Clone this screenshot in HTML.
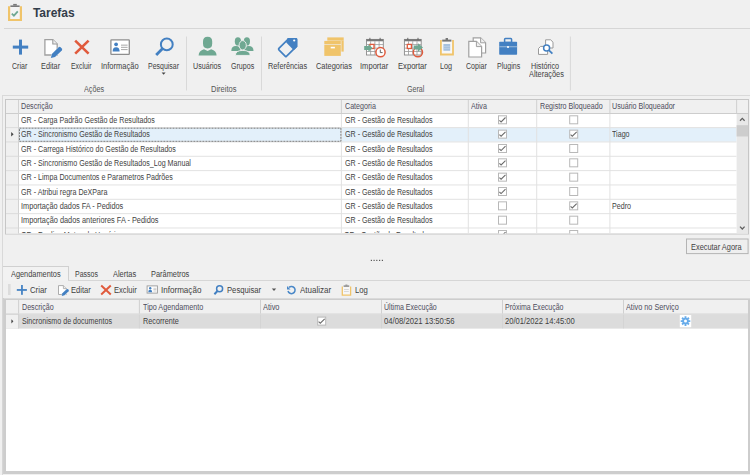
<!DOCTYPE html>
<html><head><meta charset="utf-8"><style>
html,body{margin:0;padding:0;width:750px;height:475px;overflow:hidden;background:#f0f0f0;}
.t{position:absolute;white-space:nowrap;font-family:"Liberation Sans",sans-serif;transform-origin:0 0;}
svg{position:absolute;left:0;top:0}
</style></head><body>
<svg width="750" height="475" viewBox="0 0 750 475">
<path d="M9 7 H21 V20 H9 Z" fill="#f4f4f4"/>
<path d="M9.1 6.2 V20 H20.9 V6.2" fill="none" stroke="#f0c46a" stroke-width="2.2"/>
<path d="M10.4 5.4 H19.6 V7 H10.4 Z" fill="#7a7a7a"/><path d="M13.2 3.9 H16.8 V5.6 H13.2 Z" fill="#7a7a7a"/>
<path d="M11.8 13.6 L13.9 15.6 L17.8 11.3" fill="none" stroke="#6fa892" stroke-width="1.8"/>
<rect x="4" y="28" width="746" height="1" fill="#d6d6d6" />
<rect x="19" y="39.6" width="3" height="15" fill="#4380c2" />
<rect x="12.8" y="45.6" width="15.4" height="3" fill="#4380c2" />
<path d="M44.9 39.6 H52.8 L57.2 44 V55 H44.9 Z" fill="#fff" stroke="#a0a0a0" stroke-width="1.3"/>
<path d="M52.8 39.6 V44 H57.2" fill="#eee" stroke="#9a9a9a" stroke-width="1.1"/>
<path d="M53.6 55.6 L59.6 49.6" stroke="#f0f0f0" stroke-width="5" stroke-linecap="round"/>
<path d="M50.9 58 L51.9 53.9 L58.6 47.2 Q59.6 46.4 60.6 47.2 L61.8 48.4 Q62.6 49.4 61.8 50.4 L55 57.1 Z" fill="#4380c2"/>
<path d="M75.2 40.6 L88.6 53.6 M88.6 40.6 L75.2 53.6" stroke="#e05a3c" stroke-width="2.6" fill="none"/>
<rect x="110.9" y="39.9" width="18.4" height="14.4" fill="#fff" stroke="#8e8e8e" stroke-width="1.3" rx="0.6"/>
<circle cx="116.1" cy="44.3" r="1.9" fill="#4380c2"/>
<path d="M112.6 51.6 Q112.6 47.2 116.1 47.2 Q119.6 47.2 119.6 51.6 Z" fill="#4380c2"/>
<rect x="121" y="44.6" width="6.6" height="1.1" fill="#b0b0b0" />
<rect x="121" y="46.8" width="6.6" height="1.1" fill="#b0b0b0" />
<rect x="121" y="49.0" width="6.6" height="1.1" fill="#b0b0b0" />
<circle cx="166.8" cy="44.4" r="5.9" fill="none" stroke="#4380c2" stroke-width="2"/>
<path d="M162.6 48.6 L156.2 55" stroke="#4380c2" stroke-width="2.8" stroke-linecap="butt"/>
<path d="M161.6 72.6 H165.6 L163.6 74.8 Z" fill="#444"/>
<rect x="186.0" y="36.5" width="1" height="54" fill="#d9d9d9" />
<rect x="261.0" y="36.5" width="1" height="54" fill="#d9d9d9" />
<rect x="569.9" y="36.5" width="1" height="54" fill="#d9d9d9" />
<path d="M203 41.5 Q203 36.8 207.6 36.8 Q212.2 36.8 212.2 41.5 V43.5 Q212.2 48.4 207.6 48.4 Q203 48.4 203 43.5 Z" fill="#6fa892"/>
<path d="M198.6 55.4 Q198.8 50.6 204 49.2 L207.6 51 L211.2 49.2 Q216.4 50.6 216.6 55.4 Z" fill="#6fa892"/>
<path d="M231.3 50.9 Q231.3 45.9 235.95 45.9 Q240.6 45.9 240.6 50.9 Z" fill="#6fa892"/>
<path d="M243.8 50.9 Q243.8 45.9 248.65 45.9 Q253.5 45.9 253.5 50.9 Z" fill="#6fa892"/>
<ellipse cx="237.9" cy="41.45" rx="3.1" ry="4.150000000000002" fill="#6fa892"/>
<ellipse cx="246.9" cy="41.45" rx="3.1" ry="4.150000000000002" fill="#6fa892"/>
<ellipse cx="242.7" cy="45.3" rx="3.6" ry="4.699999999999999" fill="#6fa892" stroke="#f0f0f0" stroke-width="0.9"/>
<path d="M235.4 55.4 Q235.4 50.4 242.8 50.4 Q250.2 50.4 250.2 55.4 Z" fill="#6fa892" stroke="#f0f0f0" stroke-width="0.9"/>
<path d="M278.9 48.4 L288.5 38.8 H295.8 Q296.5 38.8 296.5 39.5 V46.4 L286.4 56.4 Q285.9 56.9 285.4 56.4 L278.9 49.9 Q278.2 49.2 278.9 48.4 Z" fill="none" stroke="#4380c2" stroke-width="1.7" stroke-linejoin="round"/>
<path d="M287.6 38 H296.2 Q297.3 38 297.3 39.1 V46.8 L293.8 50.2 L286.2 42.6 Z" fill="#4380c2"/>
<circle cx="294.2" cy="40.5" r="1.1" fill="#fff"/>
<rect x="327.3" y="37.4" width="16.4" height="3.2" fill="#f0c46a" />
<rect x="341.4" y="40.6" width="2.3" height="11" fill="#f0c46a" />
<rect x="324.3" y="40.9" width="16.5" height="3.2" fill="#f0c46a" />
<rect x="324.3" y="44.7" width="16.5" height="11.2" fill="#f0c46a" />
<rect x="330.7" y="46.8" width="4.2" height="1.6" fill="#fff" />
<rect x="366.5" y="39.400000000000006" width="16.8" height="15.6" fill="#fff" stroke="#8a8a8a" stroke-width="0.9"/>
<rect x="366.5" y="39.1" width="16.8" height="2.2" fill="#7a7a7a" />
<rect x="370.3" y="41.2" width="0.8" height="13.8" fill="#9a9a9a" />
<rect x="366.5" y="44.25000000000001" width="16.8" height="0.8" fill="#9a9a9a" />
<rect x="374.5" y="41.2" width="0.8" height="13.8" fill="#9a9a9a" />
<rect x="366.5" y="47.7" width="16.8" height="0.8" fill="#9a9a9a" />
<rect x="378.70000000000005" y="41.2" width="0.8" height="13.8" fill="#9a9a9a" />
<rect x="366.5" y="51.150000000000006" width="16.8" height="0.8" fill="#9a9a9a" />
<rect x="369.4" y="37.800000000000004" width="1" height="2.4" fill="#666" />
<rect x="379.6" y="37.800000000000004" width="1" height="2.4" fill="#666" />
<rect x="369.9" y="44.4" width="4.1" height="4.1" fill="#fff" stroke="#e05a3c" stroke-width="1.3"/>
<path d="M364.2 45.9 H368.4 V44.2 L372.6 48 L368.4 51.8 V50.1 H364.2 Z" fill="#6fa892"/>
<circle cx="380.5" cy="52.2" r="4.6" fill="#fff" stroke="#e05a3c" stroke-width="1.5"/>
<path d="M380.3 49.6 V52.6 H382.6" fill="none" stroke="#555" stroke-width="0.9"/>
<rect x="404.4" y="39.400000000000006" width="16.8" height="15.6" fill="#fff" stroke="#8a8a8a" stroke-width="0.9"/>
<rect x="404.4" y="39.1" width="16.8" height="2.2" fill="#7a7a7a" />
<rect x="408.2" y="41.2" width="0.8" height="13.8" fill="#9a9a9a" />
<rect x="404.4" y="44.25000000000001" width="16.8" height="0.8" fill="#9a9a9a" />
<rect x="412.4" y="41.2" width="0.8" height="13.8" fill="#9a9a9a" />
<rect x="404.4" y="47.7" width="16.8" height="0.8" fill="#9a9a9a" />
<rect x="416.6" y="41.2" width="0.8" height="13.8" fill="#9a9a9a" />
<rect x="404.4" y="51.150000000000006" width="16.8" height="0.8" fill="#9a9a9a" />
<rect x="407.29999999999995" y="37.800000000000004" width="1" height="2.4" fill="#666" />
<rect x="417.5" y="37.800000000000004" width="1" height="2.4" fill="#666" />
<rect x="407.3" y="44.4" width="4.1" height="4.1" fill="#fff" stroke="#e05a3c" stroke-width="1.3"/>
<circle cx="417.9" cy="52.2" r="4.6" fill="none" stroke="#e05a3c" stroke-width="1.5"/>
<path d="M413.8 45.4 H418 V43.3 L423 47.5 L418 51.7 V49.6 H413.8 Z" fill="#6fa892"/>
<rect x="441" y="40.8" width="12" height="13.8" fill="#f7f7f7"/>
<path d="M440.9 40 V54.5 H453 V40" fill="none" stroke="#f0c46a" stroke-width="1.8"/>
<rect x="442.2" y="39.6" width="9.2" height="2" fill="#777" />
<rect x="445.6" y="38" width="2.4" height="2" fill="#777" />
<rect x="443.4" y="44" width="6.8" height="6.8" fill="#a8c2de" />
<rect x="443.8" y="46" width="6" height="0.5" fill="#c9d9ea" />
<rect x="443.8" y="48.2" width="6" height="0.5" fill="#c9d9ea" />
<path d="M473.2 37.8 H480.6 L485.6 42.8 V53 H473.2 Z" fill="#fff" stroke="#a0a0a0" stroke-width="1.2"/>
<path d="M480.6 37.8 V42.8 H485.6" fill="#eee" stroke="#a0a0a0" stroke-width="1"/>
<path d="M468.8 41.4 H476.4 L481.6 46.6 V57 H468.8 Z" fill="#fff" stroke="#a0a0a0" stroke-width="1.2"/>
<path d="M476.4 41.4 V46.6 H481.6" fill="#eee" stroke="#a0a0a0" stroke-width="1"/>
<rect x="504.6" y="38.6" width="7" height="4" fill="none" stroke="#4380c2" stroke-width="1.5" rx="0.8"/>
<rect x="499.2" y="41.8" width="17.9" height="13" fill="#4380c2" rx="0.7"/>
<rect x="499.2" y="46.1" width="17.9" height="1.2" fill="#8fb2d8" />
<circle cx="508" cy="47" r="1.1" fill="#fff"/>
<path d="M545.6 39.8 H550.6 L553 42.2 V48 H545.6 Z" fill="#fff" stroke="#999" stroke-width="1"/>
<path d="M540.6 46.4 H547.6 V54.4 H538.5 V48.5 Z" fill="#fff" stroke="#999" stroke-width="1"/>
<circle cx="546.6" cy="48" r="3" fill="#fff" stroke="#4380c2" stroke-width="1.5"/>
<path d="M548.8 50.2 L552.4 53.6" stroke="#4380c2" stroke-width="1.8"/>
<rect x="2" y="95" width="748" height="1" fill="#d9d9d9" />
<rect x="2" y="95" width="1" height="380" fill="#d9d9d9" />
<rect x="5" y="99" width="744" height="135.5" fill="#c6c6c6" />
<rect x="6" y="100" width="742" height="133.5" fill="#ffffff" />
<rect x="6" y="100" width="742" height="13.3" fill="#f0f0f0" />
<rect x="6" y="100" width="12.5" height="133.5" fill="#f0f0f0" />
<rect x="6" y="113" width="742" height="1" fill="#cdcdcd" />
<rect x="18" y="100" width="1" height="133.5" fill="#d2d2d2" />
<rect x="19" y="127.9" width="717.5" height="13.8" fill="#e3f0fa" />
<rect x="19" y="127.1" width="717.5" height="1" fill="#e2e2e2" />
<rect x="6" y="127.1" width="12.5" height="1" fill="#dcdcdc" />
<rect x="19" y="141.44" width="717.5" height="1" fill="#e2e2e2" />
<rect x="6" y="141.44" width="12.5" height="1" fill="#dcdcdc" />
<rect x="19" y="155.78" width="717.5" height="1" fill="#e2e2e2" />
<rect x="6" y="155.78" width="12.5" height="1" fill="#dcdcdc" />
<rect x="19" y="170.12" width="717.5" height="1" fill="#e2e2e2" />
<rect x="6" y="170.12" width="12.5" height="1" fill="#dcdcdc" />
<rect x="19" y="184.45999999999998" width="717.5" height="1" fill="#e2e2e2" />
<rect x="6" y="184.45999999999998" width="12.5" height="1" fill="#dcdcdc" />
<rect x="19" y="198.8" width="717.5" height="1" fill="#e2e2e2" />
<rect x="6" y="198.8" width="12.5" height="1" fill="#dcdcdc" />
<rect x="19" y="213.14" width="717.5" height="1" fill="#e2e2e2" />
<rect x="6" y="213.14" width="12.5" height="1" fill="#dcdcdc" />
<rect x="19" y="227.48" width="717.5" height="1" fill="#e2e2e2" />
<rect x="6" y="227.48" width="12.5" height="1" fill="#dcdcdc" />
<rect x="340.9" y="100" width="1" height="13.3" fill="#d0d0d0" />
<rect x="340.9" y="114" width="1" height="119" fill="#e2e2e2" />
<rect x="467.8" y="100" width="1" height="13.3" fill="#d0d0d0" />
<rect x="467.8" y="114" width="1" height="119" fill="#e2e2e2" />
<rect x="536.2" y="100" width="1" height="13.3" fill="#d0d0d0" />
<rect x="536.2" y="114" width="1" height="119" fill="#e2e2e2" />
<rect x="609.4" y="100" width="1" height="13.3" fill="#d0d0d0" />
<rect x="609.4" y="114" width="1" height="119" fill="#e2e2e2" />
<rect x="736.1" y="100" width="1" height="13.3" fill="#d0d0d0" />
<rect x="19.5" y="128.2" width="321.4" height="13.1" fill="none" stroke="#7c7c7c" stroke-width="1" stroke-dasharray="2 1"/>
<path d="M11.2 132 L13.6 134.3 L11.2 136.6 Z" fill="#444"/>
<clipPath id="gclip"><rect x="19" y="114" width="717.5" height="119.5"/></clipPath><g clip-path="url(#gclip)">
<rect x="498.5" y="115.8" width="8" height="8" fill="#fff" stroke="#b8b8b8" stroke-width="1"/>
<path d="M499.4 120.3 L501.1 121.89999999999999 L505.5 117.5" fill="none" stroke="#6c6c6c" stroke-width="1.1"/>
<rect x="569.7" y="115.8" width="8" height="8" fill="#fff" stroke="#b8b8b8" stroke-width="1"/>
<rect x="498.5" y="130.14" width="8" height="8" fill="#fff" stroke="#b8b8b8" stroke-width="1"/>
<path d="M499.4 134.64 L501.1 136.23999999999998 L505.5 131.83999999999997" fill="none" stroke="#6c6c6c" stroke-width="1.1"/>
<rect x="569.7" y="130.14" width="8" height="8" fill="#fff" stroke="#b8b8b8" stroke-width="1"/>
<path d="M570.6 134.64 L572.3000000000001 136.23999999999998 L576.7 131.83999999999997" fill="none" stroke="#6c6c6c" stroke-width="1.1"/>
<rect x="498.5" y="144.48" width="8" height="8" fill="#fff" stroke="#b8b8b8" stroke-width="1"/>
<path d="M499.4 148.98 L501.1 150.57999999999998 L505.5 146.17999999999998" fill="none" stroke="#6c6c6c" stroke-width="1.1"/>
<rect x="569.7" y="144.48" width="8" height="8" fill="#fff" stroke="#b8b8b8" stroke-width="1"/>
<rect x="498.5" y="158.82" width="8" height="8" fill="#fff" stroke="#b8b8b8" stroke-width="1"/>
<path d="M499.4 163.32 L501.1 164.92 L505.5 160.51999999999998" fill="none" stroke="#6c6c6c" stroke-width="1.1"/>
<rect x="569.7" y="158.82" width="8" height="8" fill="#fff" stroke="#b8b8b8" stroke-width="1"/>
<rect x="498.5" y="173.16" width="8" height="8" fill="#fff" stroke="#b8b8b8" stroke-width="1"/>
<path d="M499.4 177.66 L501.1 179.26 L505.5 174.85999999999999" fill="none" stroke="#6c6c6c" stroke-width="1.1"/>
<rect x="569.7" y="173.16" width="8" height="8" fill="#fff" stroke="#b8b8b8" stroke-width="1"/>
<rect x="498.5" y="187.5" width="8" height="8" fill="#fff" stroke="#b8b8b8" stroke-width="1"/>
<path d="M499.4 192.0 L501.1 193.6 L505.5 189.2" fill="none" stroke="#6c6c6c" stroke-width="1.1"/>
<rect x="569.7" y="187.5" width="8" height="8" fill="#fff" stroke="#b8b8b8" stroke-width="1"/>
<rect x="498.5" y="201.83999999999997" width="8" height="8" fill="#fff" stroke="#b8b8b8" stroke-width="1"/>
<rect x="569.7" y="201.83999999999997" width="8" height="8" fill="#fff" stroke="#b8b8b8" stroke-width="1"/>
<path d="M570.6 206.33999999999997 L572.3000000000001 207.93999999999997 L576.7 203.53999999999996" fill="none" stroke="#6c6c6c" stroke-width="1.1"/>
<rect x="498.5" y="216.18" width="8" height="8" fill="#fff" stroke="#b8b8b8" stroke-width="1"/>
<rect x="569.7" y="216.18" width="8" height="8" fill="#fff" stroke="#b8b8b8" stroke-width="1"/>
<rect x="498.5" y="230.51999999999998" width="8" height="8" fill="#fff" stroke="#b8b8b8" stroke-width="1"/>
<path d="M499.4 235.01999999999998 L501.1 236.61999999999998 L505.5 232.21999999999997" fill="none" stroke="#6c6c6c" stroke-width="1.1"/>
<rect x="569.7" y="230.51999999999998" width="8" height="8" fill="#fff" stroke="#b8b8b8" stroke-width="1"/>
</g>
<rect x="736.6" y="114" width="11.4" height="119.5" fill="#e8e8e8" />
<rect x="736.6" y="125.2" width="11.4" height="11.3" fill="#cdcdcd" />
<path d="M740 120.7 L742.3 118.4 L744.6 120.7" fill="none" stroke="#606060" stroke-width="1.3"/>
<path d="M740 226.6 L742.3 229 L744.6 226.6" fill="none" stroke="#606060" stroke-width="1.3"/>
<rect x="686.5" y="239" width="61.6" height="14.6" fill="#efefef" stroke="#b4b4b4" stroke-width="1"/>
<rect x="370.79999999999995" y="259.8" width="1.2" height="1.2" fill="#5a5a5a" />
<rect x="373.5" y="259.8" width="1.2" height="1.2" fill="#5a5a5a" />
<rect x="376.2" y="259.8" width="1.2" height="1.2" fill="#5a5a5a" />
<rect x="379.0" y="259.8" width="1.2" height="1.2" fill="#5a5a5a" />
<rect x="381.79999999999995" y="259.8" width="1.2" height="1.2" fill="#5a5a5a" />
<rect x="3" y="266" width="65.5" height="14.5" fill="#f2f2f2" />
<rect x="3" y="266" width="66" height="1" fill="#d0d0d0" />
<rect x="68" y="266" width="1" height="14.5" fill="#d0d0d0" />
<rect x="68" y="280" width="682" height="1" fill="#d6d6d6" />
<rect x="8" y="284" width="2.6" height="11" fill="#dcdcdc" />
<rect x="21.05" y="285" width="1.8" height="9.8" fill="#4683c4" />
<rect x="16.8" y="289.05" width="10.1" height="1.8" fill="#4683c4" />
<path d="M58.5 285.6 H63.4 L66.4 288.6 V294.5 H58.5 Z" fill="#fff" stroke="#a4a4a4" stroke-width="0.9"/>
<path d="M63.4 285.6 V288.6 H66.4" fill="#eee" stroke="#a4a4a4" stroke-width="0.8"/>
<path d="M63.6 294.2 L67.4 290.6" stroke="#f0f0f0" stroke-width="3.6" stroke-linecap="round"/>
<path d="M61.8 296 L62.4 293.2 L66.6 289.2 Q67.3 288.6 68 289.2 L68.6 289.8 Q69.2 290.5 68.6 291.2 L64.5 295.2 Z" fill="#4380c2"/>
<path d="M101.2 285.6 L110.8 294.6 M110.8 285.6 L101.2 294.6" stroke="#e05a3c" stroke-width="2" fill="none"/>
<rect x="147.1" y="285.9" width="10.3" height="7.2" fill="#fff" stroke="#999" stroke-width="0.9"/>
<circle cx="150.2" cy="288.2" r="1.2" fill="#4380c2"/><path d="M148.2 292.2 Q148.2 289.8 150.2 289.8 Q152.2 289.8 152.2 292.2 Z" fill="#4380c2"/>
<rect x="153.4" y="287.84999999999997" width="3" height="0.7" fill="#bbb" />
<rect x="153.4" y="289.25" width="3" height="0.7" fill="#bbb" />
<rect x="153.4" y="290.65" width="3" height="0.7" fill="#bbb" />
<circle cx="219.6" cy="288.8" r="3" fill="none" stroke="#4380c2" stroke-width="1.5"/>
<path d="M217.4 291 L214.4 294.2" stroke="#4380c2" stroke-width="2"/>
<path d="M271.8 288.6 H276.2 L274 291 Z" fill="#555"/>
<path d="M289.0 287.4 A3.6 3.6 0 1 1 288.0 291.0" fill="none" stroke="#4a88c8" stroke-width="1.5"/>
<path d="M287 285.9 V289.4 H290.5 Z" fill="#4a88c8"/>
<rect x="342.6" y="287" width="7.8" height="8.6" fill="#f7f7f7"/>
<path d="M342.3 286.4 V295.2 H350.6 V286.4" fill="none" stroke="#f0c46a" stroke-width="1.3"/>
<rect x="343.6" y="285.4" width="5.6" height="1.4" fill="#888" />
<rect x="345.4" y="284.6" width="2" height="1" fill="#888" />
<rect x="344" y="289" width="4.8" height="0.8" fill="#d0d0d0" />
<rect x="344" y="291" width="4.8" height="0.8" fill="#d0d0d0" />
<rect x="2" y="298" width="748" height="176" fill="#cdcdcd" />
<rect x="2" y="298" width="1.2" height="176" fill="#d6d6d6" />
<rect x="4" y="298" width="746" height="1" fill="#dadada" />
<rect x="6" y="300" width="742" height="171" fill="#ffffff" />
<rect x="6" y="300" width="742" height="13.6" fill="#f0f0f0" />
<rect x="6" y="300" width="12.6" height="28.6" fill="#f0f0f0" />
<rect x="6" y="313.6" width="742" height="1" fill="#c9c9c9" />
<rect x="19" y="314.6" width="729" height="13.8" fill="#dcdcdc" />
<rect x="6" y="328.2" width="742" height="0.6" fill="#e4e4e4" />
<rect x="18.1" y="300" width="1" height="13.6" fill="#d0d0d0" />
<rect x="138.9" y="300" width="1" height="13.6" fill="#d0d0d0" />
<rect x="138.9" y="314.6" width="1" height="13.8" fill="#d4d4d4" />
<rect x="260.0" y="300" width="1" height="13.6" fill="#d0d0d0" />
<rect x="260.0" y="314.6" width="1" height="13.8" fill="#d4d4d4" />
<rect x="381.0" y="300" width="1" height="13.6" fill="#d0d0d0" />
<rect x="381.0" y="314.6" width="1" height="13.8" fill="#d4d4d4" />
<rect x="502.0" y="300" width="1" height="13.6" fill="#d0d0d0" />
<rect x="502.0" y="314.6" width="1" height="13.8" fill="#d4d4d4" />
<rect x="623.0" y="300" width="1" height="13.6" fill="#d0d0d0" />
<rect x="623.0" y="314.6" width="1" height="13.8" fill="#d4d4d4" />
<rect x="18.1" y="314" width="1" height="14.6" fill="#d0d0d0" />
<path d="M11.4 319.2 L13.4 321.3 L11.4 323.4 Z" fill="#444"/>
<rect x="317.7" y="317.1" width="8" height="8" fill="#fff" stroke="#b8b8b8" stroke-width="1"/>
<path d="M318.59999999999997 321.6 L320.3 323.20000000000005 L324.7 318.8" fill="none" stroke="#6c6c6c" stroke-width="1.1"/>
<rect x="679.8" y="315" width="11.4" height="12.2" fill="#fff"/>
<path d="M688.77 320.16 L690.30 320.13 L690.30 322.07 L688.77 322.04 L688.47 322.75 L689.58 323.81 L688.21 325.18 L687.15 324.07 L686.44 324.37 L686.47 325.90 L684.53 325.90 L684.56 324.37 L683.85 324.07 L682.79 325.18 L681.42 323.81 L682.53 322.75 L682.23 322.04 L680.70 322.07 L680.70 320.13 L682.23 320.16 L682.53 319.45 L681.42 318.39 L682.79 317.02 L683.85 318.13 L684.56 317.83 L684.53 316.30 L686.47 316.30 L686.44 317.83 L687.15 318.13 L688.21 317.02 L689.58 318.39 L688.47 319.45 Z" fill="#66abea"/><circle cx="685.5" cy="321.1" r="1.5" fill="#fff"/>
</svg>
<div style="position:absolute;left:19px;top:227px;width:717px;height:6px;overflow:hidden"><div class="t" style="left:2.10px;top:3.72px;font-size:8.4px;line-height:8.4px;color:#3f3f3f;transform:scaleX(0.851)">GR - Realiza Metas de Usuários</div><div class="t" style="left:325.40px;top:3.72px;font-size:8.4px;line-height:8.4px;color:#3f3f3f;transform:scaleX(0.851)">GR - Gestão de Resultados</div></div>
<div class="t" style="left:32.90px;top:6.90px;font-size:12px;line-height:12px;color:#333d4a;font-weight:bold;transform:scaleX(1.0000)">Tarefas</div>
<div class="t" style="left:11.50px;top:61.80px;font-size:8.4px;line-height:8.4px;color:#3f3f3f;font-weight:normal;transform:scaleX(0.8390)">Criar</div>
<div class="t" style="left:40.60px;top:61.80px;font-size:8.4px;line-height:8.4px;color:#3f3f3f;font-weight:normal;transform:scaleX(0.8737)">Editar</div>
<div class="t" style="left:70.50px;top:61.80px;font-size:8.4px;line-height:8.4px;color:#3f3f3f;font-weight:normal;transform:scaleX(0.8208)">Excluir</div>
<div class="t" style="left:101.30px;top:61.80px;font-size:8.4px;line-height:8.4px;color:#3f3f3f;font-weight:normal;transform:scaleX(0.8973)">Informação</div>
<div class="t" style="left:147.60px;top:61.80px;font-size:8.4px;line-height:8.4px;color:#3f3f3f;font-weight:normal;transform:scaleX(0.8330)">Pesquisar</div>
<div class="t" style="left:193.30px;top:61.80px;font-size:8.4px;line-height:8.4px;color:#3f3f3f;font-weight:normal;transform:scaleX(0.8521)">Usuários</div>
<div class="t" style="left:230.60px;top:61.80px;font-size:8.4px;line-height:8.4px;color:#3f3f3f;font-weight:normal;transform:scaleX(0.8432)">Grupos</div>
<div class="t" style="left:267.90px;top:61.80px;font-size:8.4px;line-height:8.4px;color:#3f3f3f;font-weight:normal;transform:scaleX(0.8741)">Referências</div>
<div class="t" style="left:315.50px;top:61.80px;font-size:8.4px;line-height:8.4px;color:#3f3f3f;font-weight:normal;transform:scaleX(0.8880)">Categorias</div>
<div class="t" style="left:360.30px;top:61.80px;font-size:8.4px;line-height:8.4px;color:#3f3f3f;font-weight:normal;transform:scaleX(0.9047)">Importar</div>
<div class="t" style="left:397.60px;top:61.80px;font-size:8.4px;line-height:8.4px;color:#3f3f3f;font-weight:normal;transform:scaleX(0.9102)">Exportar</div>
<div class="t" style="left:439.50px;top:61.80px;font-size:8.4px;line-height:8.4px;color:#3f3f3f;font-weight:normal;transform:scaleX(0.8662)">Log</div>
<div class="t" style="left:466.20px;top:61.80px;font-size:8.4px;line-height:8.4px;color:#3f3f3f;font-weight:normal;transform:scaleX(0.8400)">Copiar</div>
<div class="t" style="left:496.50px;top:61.80px;font-size:8.4px;line-height:8.4px;color:#3f3f3f;font-weight:normal;transform:scaleX(0.8431)">Plugins</div>
<div class="t" style="left:531.20px;top:61.80px;font-size:8.4px;line-height:8.4px;color:#3f3f3f;font-weight:normal;transform:scaleX(0.8627)">Histórico</div>
<div class="t" style="left:528.50px;top:70.30px;font-size:8.4px;line-height:8.4px;color:#3f3f3f;font-weight:normal;transform:scaleX(0.8811)">Alterações</div>
<div class="t" style="left:84.20px;top:84.80px;font-size:8.4px;line-height:8.4px;color:#555;font-weight:normal;transform:scaleX(0.8619)">Ações</div>
<div class="t" style="left:210.90px;top:84.80px;font-size:8.4px;line-height:8.4px;color:#555;font-weight:normal;transform:scaleX(0.8971)">Direitos</div>
<div class="t" style="left:406.60px;top:84.80px;font-size:8.4px;line-height:8.4px;color:#555;font-weight:normal;transform:scaleX(0.8487)">Geral</div>
<div class="t" style="left:21.40px;top:102.20px;font-size:8.4px;line-height:8.4px;color:#4d4d5c;font-weight:normal;transform:scaleX(0.8510)">Descrição</div>
<div class="t" style="left:344.70px;top:102.20px;font-size:8.4px;line-height:8.4px;color:#4d4d5c;font-weight:normal;transform:scaleX(0.8510)">Categoria</div>
<div class="t" style="left:471.10px;top:102.20px;font-size:8.4px;line-height:8.4px;color:#4d4d5c;font-weight:normal;transform:scaleX(0.8510)">Ativa</div>
<div class="t" style="left:539.50px;top:102.20px;font-size:8.4px;line-height:8.4px;color:#4d4d5c;font-weight:normal;transform:scaleX(0.8510)">Registro Bloqueado</div>
<div class="t" style="left:612.20px;top:102.20px;font-size:8.4px;line-height:8.4px;color:#4d4d5c;font-weight:normal;transform:scaleX(0.8510)">Usuário Bloqueador</div>
<div class="t" style="left:21.40px;top:116.00px;font-size:8.4px;line-height:8.4px;color:#3f3f3f;font-weight:normal;transform:scaleX(0.8510)">GR - Carga Padrão Gestão de Resultados</div>
<div class="t" style="left:344.70px;top:116.00px;font-size:8.4px;line-height:8.4px;color:#3f3f3f;font-weight:normal;transform:scaleX(0.8510)">GR - Gestão de Resultados</div>
<div class="t" style="left:21.40px;top:130.34px;font-size:8.4px;line-height:8.4px;color:#3f3f3f;font-weight:normal;transform:scaleX(0.8510)">GR - Sincronismo Gestão de Resultados</div>
<div class="t" style="left:344.70px;top:130.34px;font-size:8.4px;line-height:8.4px;color:#3f3f3f;font-weight:normal;transform:scaleX(0.8510)">GR - Gestão de Resultados</div>
<div class="t" style="left:612.20px;top:130.34px;font-size:8.4px;line-height:8.4px;color:#3f3f3f;font-weight:normal;transform:scaleX(0.8510)">Tiago</div>
<div class="t" style="left:21.40px;top:144.68px;font-size:8.4px;line-height:8.4px;color:#3f3f3f;font-weight:normal;transform:scaleX(0.8510)">GR - Carrega Histórico do Gestão de Resultados</div>
<div class="t" style="left:344.70px;top:144.68px;font-size:8.4px;line-height:8.4px;color:#3f3f3f;font-weight:normal;transform:scaleX(0.8510)">GR - Gestão de Resultados</div>
<div class="t" style="left:21.40px;top:159.02px;font-size:8.4px;line-height:8.4px;color:#3f3f3f;font-weight:normal;transform:scaleX(0.8510)">GR - Sincronismo Gestão de Resultados_Log Manual</div>
<div class="t" style="left:344.70px;top:159.02px;font-size:8.4px;line-height:8.4px;color:#3f3f3f;font-weight:normal;transform:scaleX(0.8510)">GR - Gestão de Resultados</div>
<div class="t" style="left:21.40px;top:173.36px;font-size:8.4px;line-height:8.4px;color:#3f3f3f;font-weight:normal;transform:scaleX(0.8510)">GR - Limpa Documentos e Parametros Padrões</div>
<div class="t" style="left:344.70px;top:173.36px;font-size:8.4px;line-height:8.4px;color:#3f3f3f;font-weight:normal;transform:scaleX(0.8510)">GR - Gestão de Resultados</div>
<div class="t" style="left:21.40px;top:187.70px;font-size:8.4px;line-height:8.4px;color:#3f3f3f;font-weight:normal;transform:scaleX(0.8510)">GR - Atribui regra DeXPara</div>
<div class="t" style="left:344.70px;top:187.70px;font-size:8.4px;line-height:8.4px;color:#3f3f3f;font-weight:normal;transform:scaleX(0.8510)">GR - Gestão de Resultados</div>
<div class="t" style="left:21.40px;top:202.04px;font-size:8.4px;line-height:8.4px;color:#3f3f3f;font-weight:normal;transform:scaleX(0.8751)">Importação dados FA - Pedidos</div>
<div class="t" style="left:344.70px;top:202.04px;font-size:8.4px;line-height:8.4px;color:#3f3f3f;font-weight:normal;transform:scaleX(0.8510)">GR - Gestão de Resultados</div>
<div class="t" style="left:612.20px;top:202.04px;font-size:8.4px;line-height:8.4px;color:#3f3f3f;font-weight:normal;transform:scaleX(0.8510)">Pedro</div>
<div class="t" style="left:21.40px;top:216.38px;font-size:8.4px;line-height:8.4px;color:#3f3f3f;font-weight:normal;transform:scaleX(0.8794)">Importação dados anteriores FA - Pedidos</div>
<div class="t" style="left:344.70px;top:216.38px;font-size:8.4px;line-height:8.4px;color:#3f3f3f;font-weight:normal;transform:scaleX(0.8510)">GR - Gestão de Resultados</div>
<div class="t" style="left:11.20px;top:269.60px;font-size:8.4px;line-height:8.4px;color:#3f3f3f;font-weight:normal;transform:scaleX(0.8798)">Agendamentos</div>
<div class="t" style="left:75.30px;top:269.60px;font-size:8.4px;line-height:8.4px;color:#3f3f3f;font-weight:normal;transform:scaleX(0.8359)">Passos</div>
<div class="t" style="left:113.10px;top:269.60px;font-size:8.4px;line-height:8.4px;color:#3f3f3f;font-weight:normal;transform:scaleX(0.8888)">Alertas</div>
<div class="t" style="left:150.80px;top:269.60px;font-size:8.4px;line-height:8.4px;color:#3f3f3f;font-weight:normal;transform:scaleX(0.8840)">Parâmetros</div>
<div class="t" style="left:29.90px;top:285.70px;font-size:8.4px;line-height:8.4px;color:#3f3f3f;font-weight:normal;transform:scaleX(0.9262)">Criar</div>
<div class="t" style="left:70.60px;top:285.70px;font-size:8.4px;line-height:8.4px;color:#3f3f3f;font-weight:normal;transform:scaleX(0.9054)">Editar</div>
<div class="t" style="left:114.10px;top:285.70px;font-size:8.4px;line-height:8.4px;color:#3f3f3f;font-weight:normal;transform:scaleX(0.9077)">Excluir</div>
<div class="t" style="left:160.60px;top:285.70px;font-size:8.4px;line-height:8.4px;color:#3f3f3f;font-weight:normal;transform:scaleX(0.9636)">Informação</div>
<div class="t" style="left:226.60px;top:285.70px;font-size:8.4px;line-height:8.4px;color:#3f3f3f;font-weight:normal;transform:scaleX(0.9158)">Pesquisar</div>
<div class="t" style="left:299.60px;top:285.70px;font-size:8.4px;line-height:8.4px;color:#3f3f3f;font-weight:normal;transform:scaleX(0.9544)">Atualizar</div>
<div class="t" style="left:354.60px;top:285.70px;font-size:8.4px;line-height:8.4px;color:#3f3f3f;font-weight:normal;transform:scaleX(0.9221)">Log</div>
<div class="t" style="left:21.50px;top:302.80px;font-size:8.4px;line-height:8.4px;color:#4d4d5c;font-weight:normal;transform:scaleX(0.8510)">Descrição</div>
<div class="t" style="left:142.60px;top:302.80px;font-size:8.4px;line-height:8.4px;color:#4d4d5c;font-weight:normal;transform:scaleX(0.8616)">Tipo Agendamento</div>
<div class="t" style="left:263.30px;top:302.80px;font-size:8.4px;line-height:8.4px;color:#4d4d5c;font-weight:normal;transform:scaleX(0.8860)">Ativo</div>
<div class="t" style="left:383.90px;top:302.80px;font-size:8.4px;line-height:8.4px;color:#4d4d5c;font-weight:normal;transform:scaleX(0.8389)">Última Execução</div>
<div class="t" style="left:505.20px;top:302.80px;font-size:8.4px;line-height:8.4px;color:#4d4d5c;font-weight:normal;transform:scaleX(0.8380)">Próxima Execução</div>
<div class="t" style="left:625.90px;top:302.80px;font-size:8.4px;line-height:8.4px;color:#4d4d5c;font-weight:normal;transform:scaleX(0.8709)">Ativo no Serviço</div>
<div class="t" style="left:21.50px;top:317.00px;font-size:8.4px;line-height:8.4px;color:#3f3f3f;font-weight:normal;transform:scaleX(0.8513)">Sincronismo de documentos</div>
<div class="t" style="left:142.60px;top:317.00px;font-size:8.4px;line-height:8.4px;color:#3f3f3f;font-weight:normal;transform:scaleX(0.8666)">Recorrente</div>
<div class="t" style="left:383.90px;top:317.00px;font-size:8.4px;line-height:8.4px;color:#3f3f3f;font-weight:normal;transform:scaleX(0.9186)">04/08/2021 13:50:56</div>
<div class="t" style="left:505.20px;top:317.00px;font-size:8.4px;line-height:8.4px;color:#3f3f3f;font-weight:normal;transform:scaleX(0.9069)">20/01/2022 14:45:00</div>
<div class="t" style="left:690.50px;top:242.50px;font-size:8.4px;line-height:8.4px;color:#3f3f3f;font-weight:normal;transform:scaleX(0.8835)">Executar Agora</div>
</body></html>
